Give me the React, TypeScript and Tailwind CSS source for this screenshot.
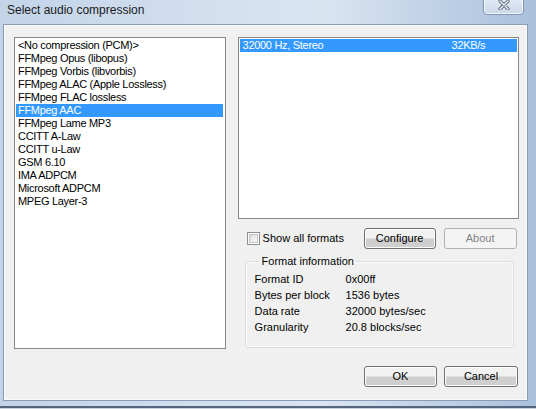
import React from "react";

// ---------------------------------------------------------------------------
// Data
// ---------------------------------------------------------------------------

const CODECS = [
  "<No compression (PCM)>",
  "FFMpeg Opus (libopus)",
  "FFMpeg Vorbis (libvorbis)",
  "FFMpeg ALAC (Apple Lossless)",
  "FFMpeg FLAC lossless",
  "FFMpeg AAC",
  "FFMpeg Lame MP3",
  "CCITT A-Law",
  "CCITT u-Law",
  "GSM 6.10",
  "IMA ADPCM",
  "Microsoft ADPCM",
  "MPEG Layer-3",
];

const SELECTED_CODEC = "FFMpeg AAC";

const FORMAT_INFO: [string, string][] = [
  ["Format ID", "0x00ff"],
  ["Bytes per block", "1536 bytes"],
  ["Data rate", "32000 bytes/sec"],
  ["Granularity", "20.8 blocks/sec"],
];

// ---------------------------------------------------------------------------
// Bits
// ---------------------------------------------------------------------------

const BUTTON =
  "flex h-[21px] items-center justify-center rounded-[3px] border border-[#707070] bg-linear-to-b from-[#f2f2f2] from-45% to-[#cfcfcf] to-55% text-[11px] text-black shadow-[inset_0_0_0_1px_#fcfcfc]";

function CloseButton() {
  return (
    <div className="mr-[12px] -mt-[4px] flex h-[19px] w-[41px] items-end justify-center rounded-b-[4px] border border-[#8497b0] bg-linear-to-b from-[#e6eef8] to-[#c9d7e9] pb-[4px] shadow-[inset_0_0_0_1px_#f3f7fc]">
      <svg width="12" height="10" viewBox="0 0 12 10">
        <path
          d="M2 1 L10 9 M10 1 L2 9"
          stroke="#5d6b7c"
          strokeWidth="3.2"
          strokeLinecap="round"
        />
        <path
          d="M2 1 L10 9 M10 1 L2 9"
          stroke="#f4f6f9"
          strokeWidth="1.4"
          strokeLinecap="round"
        />
      </svg>
    </div>
  );
}

function Checkbox() {
  return (
    <div className="flex h-[13px] w-[13px] items-center justify-center border border-[#8e8f8f] bg-white">
      <div className="h-[9px] w-[9px] border border-[#c5c5c5] bg-linear-to-br from-[#dcdcdc] to-[#fbfbfb]" />
    </div>
  );
}

// ---------------------------------------------------------------------------
// Component
// ---------------------------------------------------------------------------

export default function App() {
  return (
    <div className="flex h-[409px] w-[536px] flex-col overflow-hidden bg-linear-to-r from-[#c3d4e9] via-[#dae5f2] via-60% to-[#a9c0dc] font-['Liberation_Sans',Arial,sans-serif]">
      {/* Title bar */}
      <div className="flex h-[24px] shrink-0 items-start justify-between">
        <span className="pl-[7px] pt-[2px] text-[12px] leading-[16px] text-[#1b1b1b]">
          Select audio compression
        </span>
        <CloseButton />
      </div>

      {/* Client area */}
      <div className="ml-[3px] mr-[8px] flex h-[377px] shrink-0 flex-col border border-[#8a9cb3] bg-[#f0f0f0] pl-[10px] pr-[8px] pt-[12px] shadow-[inset_0_0_0_1px_#fafbfc]">
        <div className="flex">
          {/* Codec list */}
          <div className="h-[312px] w-[212px] border border-[#828790] bg-white py-[1px] pl-[1px] pr-[2px]">
            {CODECS.map((codec) => (
              <div
                key={codec}
                className={
                  codec === SELECTED_CODEC
                    ? "h-[13px] bg-[#3399ff] pl-[2px] text-[11px] leading-[13px] tracking-[-0.3px] whitespace-nowrap text-white"
                    : "h-[13px] pl-[2px] text-[11px] leading-[13px] tracking-[-0.3px] whitespace-nowrap text-black"
                }
              >
                {codec}
              </div>
            ))}
          </div>

          {/* Right column */}
          <div className="ml-[12px] flex w-[282px] flex-col">
            {/* Format list */}
            <div className="h-[182px] border border-[#828790] bg-white p-[1px]">
              <div className="flex h-[13px] bg-[#3399ff] pl-[3px] text-[11px] leading-[13px] tracking-[-0.3px] text-white">
                <span className="w-[209px]">32000 Hz, Stereo</span>
                <span>32KB/s</span>
              </div>
            </div>

            {/* Checkbox + buttons */}
            <div className="mt-[9px] flex items-center">
              <label className="ml-[9px] flex w-[117px] items-center gap-[3px] text-[11px] text-black">
                <Checkbox />
                Show all formats
              </label>
              <button className={`${BUTTON} w-[72px]`}>Configure</button>
              <button className="ml-[8px] flex h-[21px] w-[73px] items-center justify-center rounded-[3px] border border-[#adb2b5] bg-[#f4f4f4] text-[11px] text-[#838383]">
                About
              </button>
            </div>

            {/* Format information */}
            <fieldset className="ml-[7px] mr-[5px] mt-[5px] h-[94px] rounded-[3px] border border-[#d5dfe5] pl-[9px] shadow-[inset_0_0_0_1px_#fbfbfb]">
              <legend className="ml-[5px] px-[2px] text-[11px] leading-[14px] text-black">
                Format information
              </legend>
              <div className="mt-[3px] flex flex-col">
                {FORMAT_INFO.map(([label, value]) => (
                  <div
                    key={label}
                    className="flex h-[16px] items-center text-[11px] text-black"
                  >
                    <span className="w-[91px]">{label}</span>
                    <span>{value}</span>
                  </div>
                ))}
              </div>
            </fieldset>
          </div>
        </div>

        {/* Dialog buttons */}
        <div className="mt-[17px] flex justify-end gap-[7px] pr-[1px]">
          <button className={`${BUTTON} w-[73px]`}>OK</button>
          <button className={`${BUTTON} w-[74px]`}>Cancel</button>
        </div>
      </div>

      {/* Bottom frame edge */}
      <div className="mt-auto h-[2px] bg-[#55667c]" />
      <div className="h-[1px] bg-[#c9d3de]" />
    </div>
  );
}
